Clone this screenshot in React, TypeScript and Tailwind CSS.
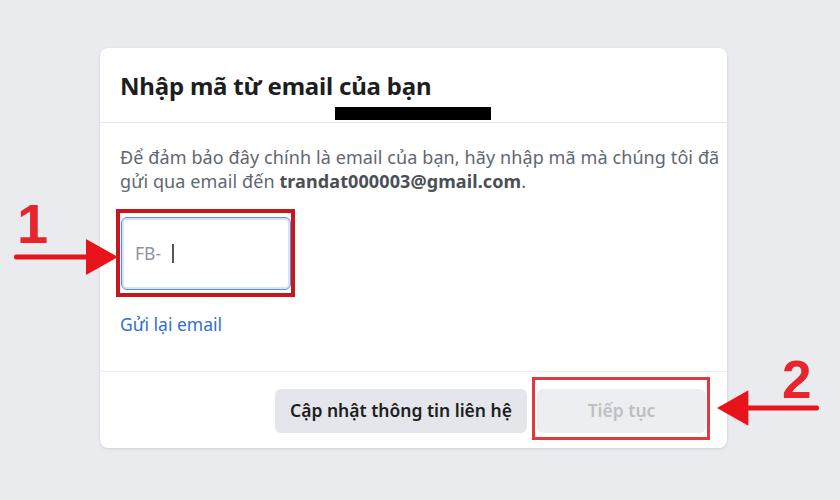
import React from 'react';

function Arrow({ dir, className }: { dir: 'right' | 'left'; className: string }) {
  return (
    <svg className={className} viewBox="0 0 104 40" fill="#e8141b">
      {dir === 'right' ? (
        <g>
          <rect x="0" y="17.5" width="76" height="5" rx="2" />
          <polygon points="72,2 104,20 72,38" />
        </g>
      ) : (
        <g>
          <rect x="28" y="17.5" width="76" height="5" rx="2" />
          <polygon points="32,2 0,20 32,38" />
        </g>
      )}
    </svg>
  );
}

export default function App() {
  return (
    <div
      className="relative w-[840px] h-[500px] overflow-hidden bg-[#e9ebee] pt-[48px] pl-[100px]"
      style={{ fontFamily: '"Noto Sans", "Open Sans", sans-serif' }}
    >
      <div className="w-[627px] h-[400px] bg-white rounded-[8px] shadow-[0_1px_3px_rgba(0,0,0,0.12)] flex flex-col">
        <div className="relative h-[75px] px-5 pt-[22px] border-b border-[#e4e6eb]">
          <h2 className="text-[24px] leading-[32px] font-bold text-[#1c1e21] tracking-[-0.2px]">
            Nhập mã từ email của bạn
          </h2>
          <div className="absolute left-[235px] top-[59px] w-[156px] h-[13px] bg-black" />
        </div>

        <div className="flex-1 pl-5 pr-[6px] pt-[22px] flex flex-col">
          <p className="text-[18px] leading-[24px] text-[#606770] tracking-[0.1px]">
            Để đảm bảo đây chính là email của bạn, hãy nhập mã mà chúng tôi đã gửi qua email đến{' '}
            <span className="font-bold text-[#4b4f56]">trandat000003@gmail.com</span>.
          </p>
          <div className="mt-[24px] ml-px w-[170px] h-[73px] rounded-[6px] border border-[#5b8fd6] shadow-[0_0_0_2px_#d4e3fb_inset] flex items-center px-[13px]">
            <span className="text-[17.5px] text-[#8d949e]">FB-</span>
            <span className="ml-[11px] w-[1.5px] h-[19px] bg-[#555]" />
          </div>
          <a className="mt-[22px] self-start text-[17.5px] leading-[24px] text-[#2f6fd0]">Gửi lại email</a>
        </div>

        <div className="h-[77px] border-t border-[#eceef1] flex items-center justify-end gap-[10px] pr-[21px] pt-[1px]">
          <button className="h-[44px] w-[252px] rounded-[6px] bg-[#e4e6eb] text-[17.5px] font-semibold text-[#1c1e21]">
            Cập nhật thông tin liên hệ
          </button>
          <button className="h-[44px] w-[169px] rounded-[6px] bg-[#eceef1] text-[17.5px] font-semibold text-[#bcc0c4]">
            Tiếp tục
          </button>
        </div>
      </div>

      {/* annotations */}
      <div className="absolute left-[116px] top-[209px] w-[179px] h-[88px] border-[4px] border-[#c8161f]" />
      <div className="absolute left-[532px] top-[377px] w-[178px] h-[63px] border-[3px] border-[#e2393e]" />
      <div
        className="absolute left-[17px] top-[192px] text-[56px] leading-[64px] font-bold text-[#e6252c]"
        style={{ fontFamily: '"Liberation Sans", Arial, sans-serif' }}
      >
        1
      </div>
      <div
        className="absolute left-[782px] top-[350px] text-[53px] leading-[60px] font-bold text-[#e6252c]"
        style={{ fontFamily: '"Liberation Sans", Arial, sans-serif' }}
      >
        2
      </div>
      <Arrow dir="right" className="absolute left-[14px] top-[237px] w-[104px] h-[40px]" />
      <Arrow dir="left" className="absolute left-[717px] top-[388px] w-[102px] h-[40px]" />
    </div>
  );
}
